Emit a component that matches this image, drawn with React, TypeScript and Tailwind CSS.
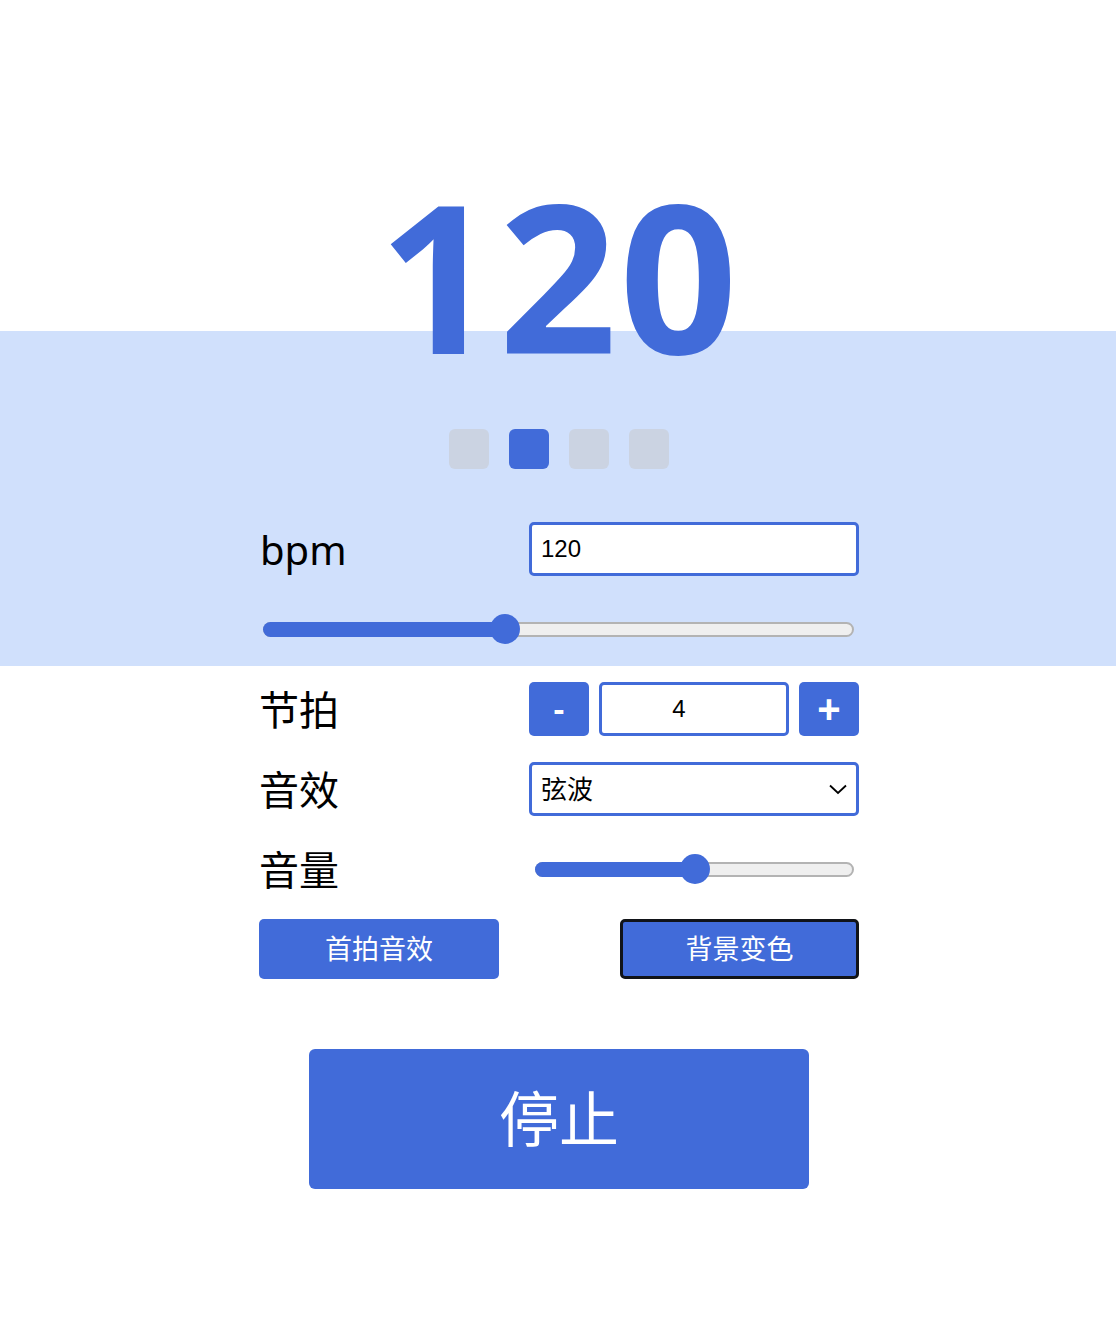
import React from "react";

const BLUE = "bg-[#416bd9]";

function Slider({ pct }: { pct: number }) {
  return (
    <div className="relative h-[30px] w-full flex items-center">
      <div className="absolute left-[4px] right-[4px] h-[15px] rounded-full bg-[#efefef] border-2 border-[#b3b3b3]" />
      <div
        className="absolute left-[4px] h-[15px] rounded-l-full bg-[#416bd9]"
        style={{ width: `calc(${pct}% - 4px)` }}
      />
      <div
        className="absolute w-[30px] h-[30px] rounded-full bg-[#416bd9] -translate-x-1/2"
        style={{ left: `${pct}%` }}
      />
    </div>
  );
}

export default function App() {
  const font = { fontFamily: '"Noto Sans", "Noto Sans CJK SC", sans-serif' };
  return (
    <div className="w-[1116px] min-h-[1339px] bg-white text-black" style={font}>
      <div className="pt-[171px]">
        <div
          className="h-[160px] text-center leading-none font-bold text-[#416bd9] text-[207px] tracking-[2px] pl-[2px]"
          style={{ fontFamily: '"Open Sans", "Noto Sans", sans-serif' }}
        >
          120
        </div>
      </div>
      <div className="bg-[#d0e0fc] pt-[98px] pb-[22px]">
        <div className="flex justify-center gap-[20px] pl-[2px]">
          <div className="w-[40px] h-[40px] rounded-[6px] bg-[#cbd3e2]" />
          <div className="w-[40px] h-[40px] rounded-[6px] bg-[#416bd9]" />
          <div className="w-[40px] h-[40px] rounded-[6px] bg-[#cbd3e2]" />
          <div className="w-[40px] h-[40px] rounded-[6px] bg-[#cbd3e2]" />
        </div>
        <div className="w-[600px] ml-[259px] mt-[53px]">
          <div className="flex items-center justify-between h-[54px]">
            <div className="text-[40px] leading-none pl-[1px] pt-[2px]">bpm</div>
            <div
              className="w-[330px] h-[54px] rounded-[5px] border-[3px] border-[#416bd9] bg-white flex items-center px-[9px] text-[24px]"
              style={{ fontFamily: '"Liberation Sans", Arial, sans-serif' }}
            >
              120
            </div>
          </div>
          <div className="mt-[38px] pr-[1px]">
            <Slider pct={41} />
          </div>
        </div>
      </div>
      <div className="w-[600px] ml-[259px] pt-[16px]">
        <div className="flex items-center justify-between h-[54px]">
          <div className="text-[40px] leading-none pt-[2px]">节拍</div>
          <div className="flex gap-[10px] w-[330px]">
            <div
              className={`w-[60px] h-[54px] rounded-[5px] ${BLUE} text-white flex items-center justify-center text-[34px] font-bold`}
              style={{ fontFamily: '"Liberation Sans", Arial, sans-serif' }}
            >
              -
            </div>
            <div
              className="w-[190px] h-[54px] rounded-[5px] border-[3px] border-[#416bd9] bg-white flex items-center justify-center pr-[30px] text-[24px]"
              style={{ fontFamily: '"Liberation Sans", Arial, sans-serif' }}
            >
              4
            </div>
            <div
              className={`w-[60px] h-[54px] rounded-[5px] ${BLUE} text-white flex items-center justify-center text-[40px] font-bold`}
              style={{ fontFamily: '"Liberation Sans", Arial, sans-serif' }}
            >
              +
            </div>
          </div>
        </div>
        <div className="flex items-center justify-between h-[54px] mt-[26px]">
          <div className="text-[40px] leading-none pt-[2px]">音效</div>
          <div className="w-[330px] h-[54px] rounded-[5px] border-[3px] border-[#416bd9] bg-white flex items-center justify-between pl-[9px] pr-[7px] text-[26px]">
            <span>弦波</span>
            <svg width="22" height="22" viewBox="0 0 22 22" fill="none">
              <path d="M3 7.5 L11 15 L19 7.5" stroke="#000" strokeWidth="1.8" />
            </svg>
          </div>
        </div>
        <div className="flex items-center justify-between h-[54px] mt-[26px]">
          <div className="text-[40px] leading-none pt-[2px]">音量</div>
          <div className="w-[330px] pl-[2px] pr-[1px]">
            <Slider pct={50} />
          </div>
        </div>
        <div className="flex justify-between mt-[23px]">
          <div className={`w-[240px] h-[60px] rounded-[5px] ${BLUE} text-white flex items-center justify-center text-[27px]`}>
            首拍音效
          </div>
          <div className={`w-[239px] h-[60px] rounded-[5px] ${BLUE} border-[3px] border-[#111318] text-white flex items-center justify-center text-[27px]`}>
            背景变色
          </div>
        </div>
        <div className="flex justify-center mt-[70px]">
          <div className={`w-[500px] h-[140px] rounded-[6px] ${BLUE} text-white flex items-center justify-center text-[60px]`}>
            停止
          </div>
        </div>
      </div>
    </div>
  );
}
